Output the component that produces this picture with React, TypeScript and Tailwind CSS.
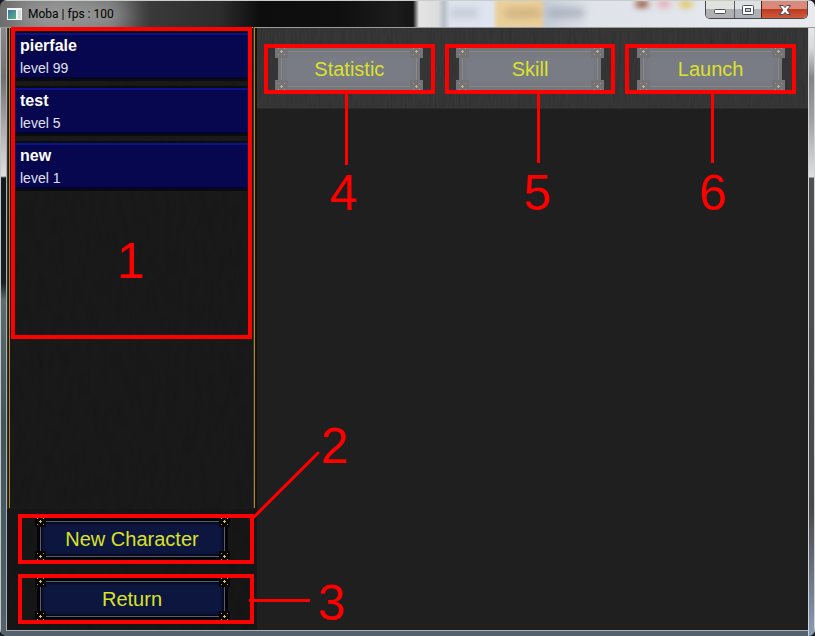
import React from "react";

type Character = { name: string; level: number };

const characters: Character[] = [
  { name: "pierfale", level: 99 },
  { name: "test", level: 5 },
  { name: "new", level: 1 },
];

const tabs = [
  { label: "Statistic", mark: "4", line: "left-[77px] h-[71px]", digit: "left-[62px]" },
  { label: "Skill", mark: "5", line: "left-[88px] h-[69px]", digit: "left-[75px]" },
  { label: "Launch", mark: "6", line: "left-[82px] h-[69px]", digit: "left-[70px]" },
];

function Grain({ id, frequency, strength }: { id: string; frequency: string; strength: number }) {
  return (
    <svg className="pointer-events-none absolute inset-0 h-full w-full" aria-hidden="true">
      <filter id={id} x="0" y="0" width="100%" height="100%">
        <feTurbulence type="fractalNoise" baseFrequency={frequency} numOctaves="2" seed="4" />
        <feColorMatrix type="saturate" values="0" />
        <feComponentTransfer>
          <feFuncA type="linear" slope="0" intercept={strength} />
        </feComponentTransfer>
      </filter>
      <rect width="100%" height="100%" filter={`url(#${id})`} />
    </svg>
  );
}

const studDots = [
  [2, 2], [8, 2], [2, 8], [8, 8],
];

function Stud({ className, dark }: { className: string; dark: boolean }) {
  return (
    <svg
      className={`absolute ${dark ? "size-[11px]" : "size-[13px]"} ${className}`}
      viewBox={dark ? "0 0 11 11" : "-1 -1 13 13"}
      shapeRendering="crispEdges"
      aria-hidden="true"
    >
      <rect x="-1" y="-1" width="13" height="13" fill={dark ? "#050507" : "#747478"} />
      {studDots.map(([x, y]) => (
        <rect key={`${x}-${y}`} x={x} y={y} width="1" height="1" fill={dark ? "#b8922c" : "#a39a80"} />
      ))}
      <path d="M5 4h1v1h1v1h-1v1h-1v-1h-1v-1h1z" fill={dark ? "#f0c030" : "#c8b47c"} />
    </svg>
  );
}

function GameButton({ label, dark = false }: { label: string; dark?: boolean }) {
  return (
    <button
      type="button"
      className={`relative h-[42px] overflow-hidden text-[20px] leading-6 text-[#dbe22b] ${
        dark ? "w-[195px]" : "w-[148px]"
      }`}
    >
      <span
        className={`absolute inset-y-0 ${
          dark
            ? "inset-x-0.5 bg-[#0d163e] shadow-[inset_0_0_3px_5px_#030409]"
            : "inset-x-[3px] bg-[#797b85] shadow-[inset_0_0_4px_5px_#75767a]"
        }`}
      />
      <span
        className={`absolute inset-y-[3px] border ${
          dark ? "inset-x-[5px] border-[#5e5f64]" : "inset-x-[6px] border-[#898989]"
        }`}
      />
      <Stud dark={dark} className={dark ? "-top-0.5 left-0" : "-top-[3px] left-0"} />
      <Stud dark={dark} className={dark ? "-top-0.5 right-0" : "-top-[3px] right-0"} />
      <Stud dark={dark} className={dark ? "-bottom-0.5 left-0" : "-bottom-[3px] left-0"} />
      <Stud dark={dark} className={dark ? "-bottom-0.5 right-0" : "-bottom-[3px] right-0"} />
      <span className="relative">{label}</span>
    </button>
  );
}

function Mark({ children, className }: { children: string; className: string }) {
  return (
    <span className={`pointer-events-none absolute z-20 text-[50px] leading-[50px] text-[#ff0000] ${className}`}>
      {children}
    </span>
  );
}

function TitleBar() {
  return (
    <header className="relative flex h-7 items-start overflow-hidden border-b border-t border-[#c9cdcc] border-b-[#9a9c9c] bg-[#101010]">
      <div className="absolute inset-0 bg-[linear-gradient(90deg,#6c6c6c_0px,#7c7c7c_60px,#686868_110px,#3a3a3a_150px,#2c2c2c_220px,#0d0d0d_260px,#0f0f0f_340px,#1c1c1c_395px,#151515_413px,#e4e4e4_419px,#dcdcdc_438px,#b9bec8_444px,#dfe5f0_450px,#dfe5f0_492px,#ecd09a_498px,#ecd09a_540px,#c6ceda_546px,#dfe3ea_590px,#e8eaee_815px)]" />
      <div className="absolute left-4 top-0.5 h-6 w-28 rounded-full bg-[#b4b4b4] opacity-70 blur-md" />
      <div className="absolute left-[505px] top-2 h-2 w-9 bg-[#a88a58] opacity-50 blur-[4px]" />
      <div className="absolute left-[548px] top-2 h-2 w-9 bg-[#77808e] opacity-50 blur-[4px]" />
      <div className="absolute left-[450px] top-2 h-2 w-7 bg-[#aab0bc] opacity-60 blur-[4px]" />
      <div className="absolute left-[636px] top-0 h-1.5 w-3 bg-[#8a3c20] blur-[3px]" />
      <div className="absolute left-[658px] top-0 h-1.5 w-3 bg-[#e8a0ac] blur-[3px]" />
      <div className="absolute left-[680px] top-0 h-1.5 w-3 bg-[#e0c040] blur-[3px]" />
      <svg className="relative ml-[7px] mt-[7px] h-3 w-[15px]" viewBox="0 0 15 12" aria-hidden="true">
        <defs>
          <linearGradient id="appIcon" x1="0" y1="0" x2="1" y2="1">
            <stop offset="0" stopColor="#3c6fae" />
            <stop offset="1" stopColor="#58b877" />
          </linearGradient>
        </defs>
        <rect width="15" height="12" fill="#f3f4f4" />
        <rect x="1" y="2" width="8" height="9" fill="url(#appIcon)" />
        <rect x="11" y="2" width="3" height="9" fill="#d9dcdd" />
      </svg>
      <h1 className="relative ml-[6px] mt-[5px] font-[Roboto,'Open_Sans',sans-serif] text-[12px] leading-4 text-black">
        Moba | fps : 100
      </h1>
      <div className="relative ml-auto mr-[7px] flex h-[18px] overflow-hidden rounded-b-[5px] border border-t-0 border-[#45484f]">
        <button type="button" aria-label="Minimize" className="flex w-7 items-center justify-center bg-linear-to-b from-[#dfe2dd] from-50% to-[#aeb0b1] to-50%">
          <svg className="mt-1 h-[5px] w-3" viewBox="0 0 12 5" aria-hidden="true">
            <rect x=".5" y=".5" width="11" height="4" rx="1" fill="#fff" stroke="#4d505c" />
          </svg>
        </button>
        <button type="button" aria-label="Maximize" className="flex w-[27px] items-center justify-center border-l border-[#5a5d63] bg-linear-to-b from-[#dfe2e2] from-50% to-[#aeb1b6] to-50%">
          <svg className="h-[10px] w-3" viewBox="0 0 12 10" aria-hidden="true">
            <rect x=".5" y=".5" width="11" height="9" rx="1" fill="#fff" stroke="#4d505c" />
            <rect x="3.5" y="3.5" width="5" height="3" fill="#c3c6ca" stroke="#4d505c" />
          </svg>
        </button>
        <button type="button" aria-label="Close" className="flex w-[46px] items-center justify-center border-l border-[#5a1c14] bg-linear-to-b from-[#d98a7b] from-45% via-[#bf3a22] via-50% to-[#cf5a3c]">
          <svg className="h-[10px] w-3" viewBox="0 0 12 10" aria-hidden="true">
            <path d="M.5.5h3.700L6 2.600 7.800.5h3.700L8.200 5l3.300 4.500H7.800L6 7.400 4.200 9.500H.5L3.800 5z" fill="#fff" stroke="#4b4555" />
          </svg>
        </button>
      </div>
    </header>
  );
}

function CharacterList() {
  return (
    <section className="relative z-10 -mt-px ml-px h-[312px] border-4 border-[#ff0000] pt-0.5">
      <ul className="flex flex-col">
        {characters.map((c) => (
          <li key={c.name} className="h-[55px]">
            <button
              type="button"
              className="flex h-[46px] w-full flex-col items-start border-b-2 border-t-2 border-b-[#03042c] border-t-[#0a1290] bg-[#06074f] pl-[5px] text-left shadow-[0_2px_0_#0b0b0b,0_-2px_0_#0b0b0b]"
            >
              <span className="text-[16px] font-bold leading-[22px] text-white">{c.name}</span>
              <span className="text-[14px] leading-[22px] text-[#e2e2ee]">level {c.level}</span>
            </button>
          </li>
        ))}
      </ul>
      <Mark className="left-[102px] top-[205px]">1</Mark>
    </section>
  );
}

function Sidebar() {
  return (
    <aside className="relative flex w-[250px] shrink-0 flex-col bg-[#111111]">
      <div className="relative mr-0.5 flex-1 border-l border-[#303030] bg-[#141414] pl-px">
        <Grain id="sideGrain" frequency="0.14 0.04" strength={0.03} />
        <div className="relative h-full border-x border-[#b98a06]">
          <div className="h-full border-r border-[#333333] pr-px">
            <CharacterList />
          </div>
        </div>
      </div>
      <div className="relative flex flex-col gap-2.5 pb-1.5 pl-[11px] pr-[3px] pt-[5px]">
        <Grain id="footGrain" frequency="0.14 0.04" strength={0.03} />
        <div className="relative flex h-[50px] justify-center border-4 border-[#ff0000] pr-2">
          <GameButton label="New Character" dark />
          <svg className="pointer-events-none absolute -top-[67px] left-[228px] z-20 h-[68px] w-[72px]" viewBox="0 0 72 68" aria-hidden="true">
            <path d="M4 66L68 2" stroke="#ff0000" strokeWidth="3" strokeLinecap="round" />
          </svg>
          <Mark className="-top-[97px] left-[299px]">2</Mark>
        </div>
        <div className="relative flex h-[50px] justify-center border-4 border-[#ff0000] pr-2">
          <GameButton label="Return" dark />
          <span className="absolute left-[227px] top-[21px] z-20 h-[3px] w-[61px] bg-[#ff0000]" />
          <Mark className="left-[296px] top-0">3</Mark>
        </div>
      </div>
    </aside>
  );
}

function MainPanel() {
  return (
    <main className="min-w-0 flex-1 bg-[#1f1f1f]">
      <nav className="relative flex h-[81px] gap-2.5 border-b border-[#2a2a2a] bg-[#282828] pl-[7px] pr-3 pt-4">
        <Grain id="navGrain" frequency="0.5 0.04" strength={0.09} />
        {tabs.map((t) => (
          <div key={t.label} className="relative flex h-[50px] flex-1 justify-center border-4 border-[#ff0000]">
            <GameButton label={t.label} />
            <span className={`absolute top-[46px] z-20 w-[3px] bg-[#ff0000] ${t.line}`} />
            <Mark className={`top-[120px] ${t.digit}`}>{t.mark}</Mark>
          </div>
        ))}
      </nav>
    </main>
  );
}

export default function App() {
  return (
    <div className="bg-[#1a1c1e] font-['Liberation_Sans',Arial,sans-serif]">
      <div className="flex min-h-screen flex-col overflow-hidden rounded-[7px] bg-[#53626c]">
        <TitleBar />
        <div className="flex flex-1 bg-[linear-gradient(180deg,#8a8a8a_0px,#707070_50px,#b8b8b8_110px,#e0e0e0_148px,#15191b_150px,#182022_255px,#5d6c6f_272px,#40545a_400px,#53626c_100%)]">
          <div className="w-1.5 shrink-0 border-l border-[#c4c8c8]" />
          <div className="mb-[5px] flex min-w-0 flex-1 border-b border-l border-[#a8b0b4]">
            <Sidebar />
            <MainPanel />
          </div>
          <div className="w-[7px] shrink-0 border-x border-[#cfd3d6] bg-[linear-gradient(180deg,#e4e7ec_0px,#d8dade_20px,#858585_50px,#a0a0a0_90px,#e0e0e0_149px,#505050_150px,#484848_480px,#8a9cb8_100%)]" />
        </div>
      </div>
    </div>
  );
}
